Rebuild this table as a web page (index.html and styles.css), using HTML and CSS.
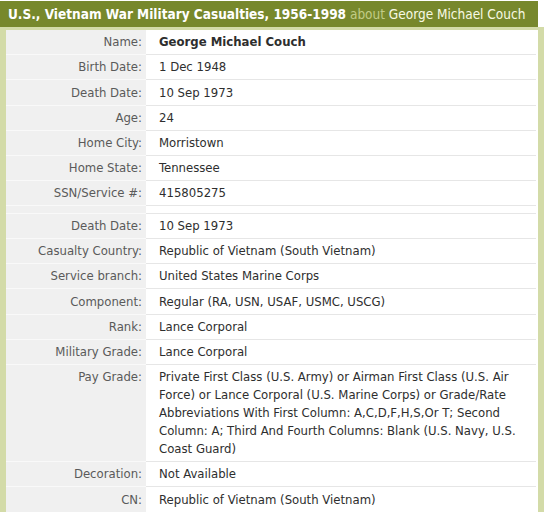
FILE: index.html
```html
<!DOCTYPE html>
<html>
<head>
<meta charset="utf-8">
<link rel="stylesheet" href="styles.css">
</head>
<body>
<div class="record">
  <div class="title"><b>U.S., Vietnam War Military Casualties, 1956-1998</b> <span class="about">about</span> <span class="who">George Michael Couch</span></div>
  <div class="frame">
    <table class="facts">
      <tr><th>Name:</th><td><b>George Michael Couch</b></td></tr>
      <tr><th>Birth Date:</th><td>1 Dec 1948</td></tr>
      <tr><th>Death Date:</th><td>10 Sep 1973</td></tr>
      <tr><th>Age:</th><td>24</td></tr>
      <tr><th>Home City:</th><td>Morristown</td></tr>
      <tr><th>Home State:</th><td>Tennessee</td></tr>
      <tr><th>SSN/Service #:</th><td>415805275</td></tr>
      <tr class="spacer"><th></th><td></td></tr>
      <tr><th>Death Date:</th><td>10 Sep 1973</td></tr>
      <tr><th>Casualty Country:</th><td>Republic of Vietnam (South Vietnam)</td></tr>
      <tr><th>Service branch:</th><td>United States Marine Corps</td></tr>
      <tr><th>Component:</th><td>Regular (RA, USN, USAF, USMC, USCG)</td></tr>
      <tr><th>Rank:</th><td>Lance Corporal</td></tr>
      <tr><th>Military Grade:</th><td>Lance Corporal</td></tr>
      <tr><th>Pay Grade:</th><td>Private First Class (U.S. Army) or Airman First Class (U.S. Air Force) or Lance Corporal (U.S. Marine Corps) or Grade/Rate Abbreviations With First Column: A,C,D,F,H,S,Or T; Second Column: A; Third And Fourth Columns: Blank (U.S. Navy, U.S. Coast Guard)</td></tr>
      <tr><th>Decoration:</th><td>Not Available</td></tr>
      <tr><th>CN:</th><td>Republic of Vietnam (South Vietnam)</td></tr>
    </table>
  </div>
</div>
</body>
</html>
```
FILE: styles.css
```css
html, body {
  margin: 0;
  padding: 0;
  background: #ffffff;
}
body {
  font-family: "DejaVu Sans Condensed", "DejaVu Sans", sans-serif;
  font-stretch: condensed;
  font-size: 13px;
  color: #333333;
}
.record {
  width: 545px;
  padding-top: 1px;
}
.title {
  background: #77882c;
  color: #ffffff;
  font-size: 13.5px;
  line-height: 26px;
  padding: 0 8px;
  margin-right: 7px;
  white-space: nowrap;
}
.title b {
  font-weight: bold;
}
.about {
  color: #c2cc87;
}
.who {
  color: #f7f9e4;
}
.frame {
  border-left: 6px solid #d3dba8;
  border-right: 6px solid #d3dba8;
  border-top: 3px solid #d3dba8;
  margin-right: 1px;
  background: #ffffff;
  padding-right: 2px;
}
.facts {
  border-collapse: collapse;
  width: 100%;
}
.facts th {
  width: 128px;
  background: #f0f0f0;
  color: #5a5a5a;
  font-weight: normal;
  text-align: right;
  vertical-align: top;
  padding: 3.2px 4px 3px 8px;
  line-height: 18px;
  border-bottom: 1px solid #f9f9f9;
  white-space: nowrap;
}
.facts td {
  color: #2e2e2e;
  padding: 3.2px 10px 3px 13px;
  line-height: 18px;
  border-bottom: 1px solid #e6e6e6;
  vertical-align: top;
}
.facts td b {
  font-weight: bold;
}
.facts tr.spacer th,
.facts tr.spacer td {
  padding: 0;
  height: 6.6px;
  line-height: 6px;
}
```
